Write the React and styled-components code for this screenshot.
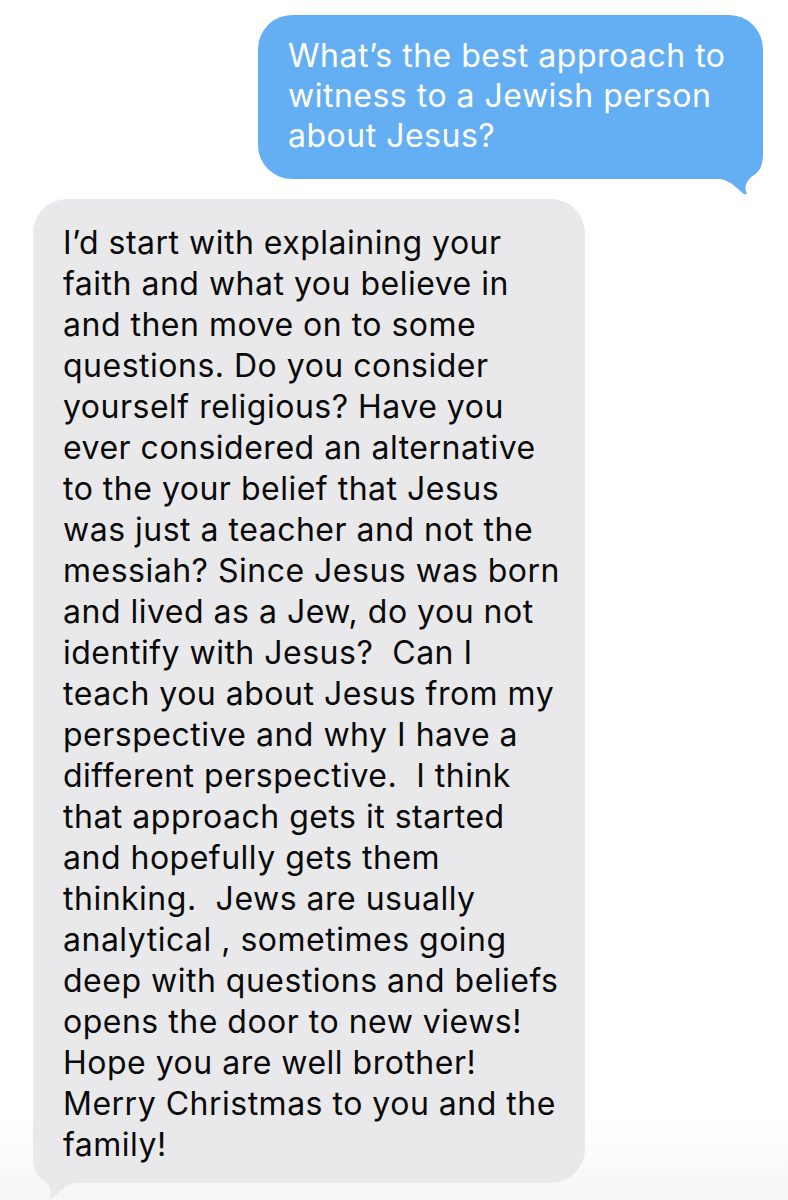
import React from 'react';
import styled, { createGlobalStyle } from 'styled-components';

const question = [
  'What’s the best approach to',
  'witness to a Jewish person',
  'about Jesus?',
];

const answer = [
  'I’d start with explaining your',
  'faith and what you believe in',
  'and then move on to some',
  'questions. Do you consider',
  'yourself religious? Have you',
  'ever considered an alternative',
  'to the your belief that Jesus',
  'was just a teacher and not the',
  'messiah? Since Jesus was born',
  'and lived as a Jew, do you not',
  'identify with Jesus?  Can I',
  'teach you about Jesus from my',
  'perspective and why I have a',
  'different perspective.  I think',
  'that approach gets it started',
  'and hopefully gets them',
  'thinking.  Jews are usually',
  'analytical , sometimes going',
  'deep with questions and beliefs',
  'opens the door to new views!',
  'Hope you are well brother!',
  'Merry Christmas to you and the',
  'family!',
];

const bubbleColor = {
  sent: '#64aff4',
  received: '#e9e9eb',
};

// iMessage style tail, drawn for the right side and mirrored for the left
const Tail = ({ side }) => (
  <TailSvg side={side} width="63" height="56" viewBox="0 0 63 56">
    <path
      d="M63 0 L63 12 C63 24 60 30 54 34 C48 38 44 44 46 50 Q48 54 44 53 C38 49 32 40 20 38 L0 38 L0 0 Z"
      fill={bubbleColor[side === 'right' ? 'sent' : 'received']}
    />
  </TailSvg>
);

const App = () => {
  return (
    <>
      <GlobalStyle />
      <Page>
        <Bubble side="right">
          {question.map((line, i) => (
            <Line key={i}>{line}</Line>
          ))}
          <Tail side="right" />
        </Bubble>
        <Bubble side="left">
          {answer.map((line, i) => (
            <Line key={i}>{line}</Line>
          ))}
          <Tail side="left" />
        </Bubble>
      </Page>
    </>
  );
};

export default App;

const GlobalStyle = createGlobalStyle`
  body {
    margin: 0;
    background: #fff;
    font-family: Inter, "Liberation Sans", sans-serif;
  }
`;

const Page = styled.div`
  width: 788px;
  min-height: 1200px;
  box-sizing: border-box;
  padding-top: 15px;
  display: flex;
  flex-direction: column;
  background: linear-gradient(to bottom, #fff 93%, #f6f6f7 100%);
`;

const Bubble = styled.div`
  position: relative;
  box-sizing: border-box;
  color: ${(p) => (p.side === 'right' ? '#fff' : '#0a0a0a')};
  background: ${(p) => bubbleColor[p.side === 'right' ? 'sent' : 'received']};
  font-size: 32px;
  letter-spacing: 0.5px;
  border-radius: 34px;
  ${(p) =>
    p.side === 'right'
      ? `
    align-self: flex-end;
    margin-right: 25px;
    width: 505px;
    padding: 21px 10px 23px 30px;
    line-height: 40px;
    border-bottom-right-radius: 26px;
  `
      : `
    align-self: flex-start;
    margin: 20px 0 0 33px;
    width: 552px;
    padding: 23px 10px 18px 30px;
    line-height: 41px;
    border-bottom-left-radius: 26px;
  `}
`;

const Line = styled.div`
  position: relative;
  z-index: 1;
  white-space: pre;
`;

const TailSvg = styled.svg`
  position: absolute;
  bottom: -18px;
  ${(p) => (p.side === 'right' ? 'right: 0;' : 'left: 0; transform: scaleX(-1);')}
`;
